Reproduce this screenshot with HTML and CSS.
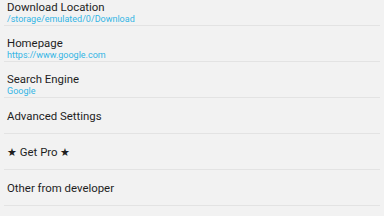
FILE: index.html
```html
<!DOCTYPE html>
<html lang="en">
<head>
    <meta charset="UTF-8">
    <meta name="viewport" content="width=device-width, initial-scale=1.0">
    <title>Settings</title>
    <link rel="stylesheet" href="styles.css">
</head>
<body>
    <ul class="pref-list">
        <li class="pref pref-summary-row">
            <span class="pref-title">Download Location</span>
            <span class="pref-summary">/storage/emulated/0/Download</span>
        </li>
        <li class="pref pref-summary-row">
            <span class="pref-title">Homepage</span>
            <span class="pref-summary">https://www.google.com</span>
        </li>
        <li class="pref pref-summary-row">
            <span class="pref-title">Search Engine</span>
            <span class="pref-summary">Google</span>
        </li>
        <li class="pref">
            <span class="pref-title">Advanced Settings</span>
        </li>
        <li class="pref">
            <span class="pref-title">&#9733; Get Pro &#9733;</span>
        </li>
        <li class="pref">
            <span class="pref-title">Other from developer</span>
        </li>
    </ul>
</body>
</html>
```

FILE: styles.css
```css
body {
    margin: 0;
    padding: 0;
    background-color: #f2f2f2;
    font-family: Roboto, "Noto Sans", sans-serif;
    overflow: hidden;
}

/* list is scrolled a little, first row is cut at the top */
.pref-list {
    list-style: none;
    margin: -10px 0 0 0;
    padding: 0;
}

.pref {
    box-sizing: border-box;
    height: 36px;
    margin: 0 4px;
    padding: 1px 3px 0 3px;
    border-bottom: 1px solid #e3e3e3;
    display: flex;
    flex-direction: column;
    justify-content: center;
}

.pref-summary-row {
    justify-content: flex-start;
    padding-top: 11px;
}

.pref-title {
    font-size: 11.4px;
    line-height: 13px;
    color: #1e1e1e;
}

.pref-summary {
    font-size: 9px;
    line-height: 10px;
    color: #33b5e5;
}
```
